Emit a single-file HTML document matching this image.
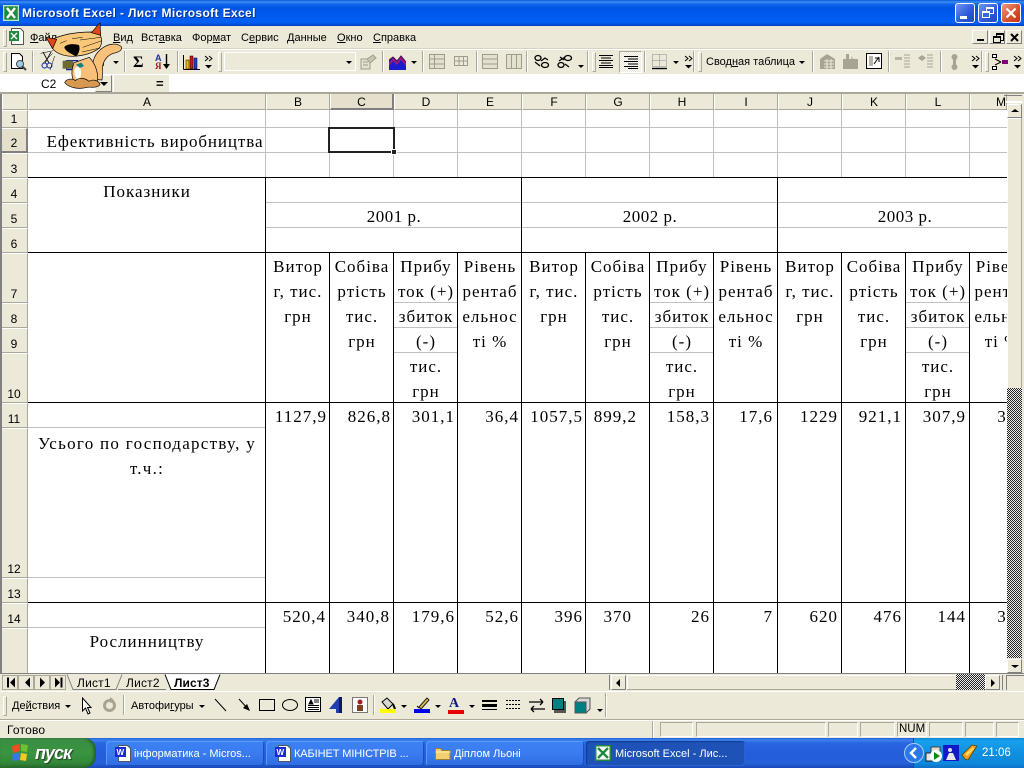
<!DOCTYPE html>
<html><head><meta charset="utf-8"><title>Microsoft Excel</title>
<style>
html,body{margin:0;padding:0;width:1024px;height:768px;overflow:hidden;background:#ece9d8}
div,span,svg{position:absolute}
u{position:static}
.t{white-space:nowrap;font:11px/14px "Liberation Sans",sans-serif;color:#000;letter-spacing:0}
.c,.n{position:absolute;font:17px/25px "Liberation Serif",serif;color:#000;white-space:nowrap;letter-spacing:1px}
.c{width:64px;text-align:center}
.n{text-align:right;margin-right:-1px}
.ch{top:94px;height:16px;font:12px/16px "Liberation Sans",sans-serif;text-align:center;border-right:1px solid #aca899;border-left:1px solid #fff;box-sizing:border-box;border-bottom:1px solid #aca899}
.rh{left:2px;width:26px;font:12px/14px "Liberation Sans",sans-serif;text-align:center;border-bottom:1px solid #aca899;border-top:1px solid #fff;box-sizing:border-box;border-right:1px solid #aca899}
.rh span{position:absolute;left:0;width:24px;bottom:1px}
.sep{width:1px;background:#aca899;border-right:1px solid #fff}
.grip{width:2px;background:#ece9d8;border:1px solid #aca899;border-right-color:#aca899;border-left-color:#fff;border-top-color:#fff}
.dr{width:0;height:0;border-left:3px solid transparent;border-right:3px solid transparent;border-top:3px solid #000}
.dit{background:conic-gradient(#222 25%,#eee 0 50%,#222 0 75%,#eee 0) 0 0/2px 2px}
.btn{background:#ece9d8;border:1px solid;border-color:#fff #808080 #808080 #fff;box-sizing:border-box}
.pn{top:722px;height:15px;border:1px solid;border-color:#aca899 #fff #fff #aca899;box-sizing:border-box}
.task{top:741px;height:25px;background:linear-gradient(#3c81f3,#3a7cf0 50%,#2f6ce0);border-radius:3px;box-shadow:inset 1px 1px 0 #5a9af8,inset -1px -1px 0 #1a4fc0;color:#fff;box-sizing:border-box}
.task span{left:28px;top:6px;color:#fff;font:11px/14px "Liberation Sans",sans-serif;letter-spacing:0;white-space:nowrap}
</style></head>
<body>

<!-- Title bar -->
<div style="left:0;top:0;width:1024px;height:26px;background:linear-gradient(#0a56d8 0,#3f8df6 2px,#1266ec 4px,#0054e3 8px,#0058ee 50%,#0360f4 85%,#0350dc 94%,#0040b8 100%)"></div>
<svg style="left:3px;top:5px" width="16" height="16"><rect width="16" height="16" fill="#fff"/><rect x="1" y="1" width="14" height="14" fill="#1e8a3c"/><path d="M4 3l8 10M12 3l-8 10" stroke="#fff" stroke-width="2.4"/><path d="M1 1h14v14H1z" fill="none" stroke="#7cc48c"/></svg>
<div class="t" style="left:22px;top:6px;font:bold 12px/15px 'Liberation Sans',sans-serif;color:#fff;letter-spacing:.37px;text-shadow:1px 1px 0 #0a2f90">Microsoft Excel - Лист Microsoft Excel</div>
<div style="left:955px;top:3px;width:20px;height:20px;box-sizing:border-box;border:1px solid #fff;border-radius:3px;background:linear-gradient(135deg,#6e97f4,#2a58d8 60%,#2248c0)"><div style="left:4px;top:12px;width:7px;height:3px;background:#fff"></div></div>
<div style="left:978px;top:3px;width:20px;height:20px;box-sizing:border-box;border:1px solid #fff;border-radius:3px;background:linear-gradient(135deg,#6e97f4,#2a58d8 60%,#2248c0)"><div style="left:7px;top:3px;width:8px;height:7px;box-sizing:border-box;border:1px solid #fff;border-top-width:2px"></div><div style="left:3px;top:7px;width:8px;height:7px;box-sizing:border-box;border:1px solid #fff;border-top-width:2px;background:#3a68e0"></div></div>
<div style="left:1001px;top:3px;width:20px;height:20px;box-sizing:border-box;border:1px solid #fff;border-radius:3px;background:linear-gradient(135deg,#eb9a80,#d8502c 60%,#b83414)"><svg style="left:3px;top:3px" width="12" height="12"><path d="M1.500 1.500l9 9M10.500 1.500l-9 9" stroke="#fff" stroke-width="2.200"/></svg></div>

<!-- Menu bar -->
<div class="grip" style="left:3px;top:29px;height:16px"></div>
<svg style="left:8px;top:28px" width="17" height="18"><path d="M3.500.5h9l3 3v13h-12z" fill="#fff" stroke="#555"/><rect x="1" y="3" width="10" height="10" fill="#1e8a3c"/><path d="M3 5l6 6M9 5l-6 6" stroke="#fff" stroke-width="1.400"/></svg>
<div class="t" style="left:30px;top:31px"><u>Ф</u>айл</div>
<div class="t" style="left:113px;top:31px"><u>В</u>ид</div>
<div class="t" style="left:141px;top:31px">Вст<u>а</u>вка</div>
<div class="t" style="left:192px;top:31px">Фор<u>м</u>ат</div>
<div class="t" style="left:241px;top:31px">С<u>е</u>рвис</div>
<div class="t" style="left:287px;top:31px"><u>Д</u>анные</div>
<div class="t" style="left:337px;top:31px"><u>О</u>кно</div>
<div class="t" style="left:373px;top:31px"><u>С</u>правка</div>
<div class="btn" style="left:972px;top:30px;width:16px;height:14px"><div style="left:4px;top:8px;width:7px;height:2px;background:#000"></div></div>
<div class="btn" style="left:989px;top:30px;width:16px;height:14px"><div style="left:6px;top:2px;width:6px;height:5px;border:1px solid #000;border-top-width:2px"></div><div style="left:3px;top:5px;width:6px;height:4px;border:1px solid #000;border-top-width:2px;background:#ece9d8"></div></div>
<div class="btn" style="left:1006px;top:30px;width:16px;height:14px"><svg style="left:3px;top:2px" width="9" height="9"><path d="M1 1l7 7M8 1l-7 7" stroke="#000" stroke-width="2"/></svg></div>
<div style="left:0;top:48px;width:1024px;height:1px;background:#d8d4c4"></div>
<div style="left:0;top:49px;width:1024px;height:1px;background:#fff"></div>

<!-- Standard toolbar -->
<div class="grip" style="left:3px;top:52px;height:18px"></div>
<svg style="left:9px;top:53px" width="18" height="18"><path d="M2.500.5h8l3 3v12h-11z" fill="#fff" stroke="#000"/><circle cx="11" cy="11" r="3.500" fill="#9cd0e8" stroke="#444"/><path d="M13 13l4 4" stroke="#444" stroke-width="2"/></svg>
<div class="sep" style="left:32px;top:51px;height:21px"></div>
<svg style="left:41px;top:52px" width="12" height="17"><path d="M2 0l6 11M10 0L4 11" stroke="#222"/><circle cx="3.500" cy="13.500" r="2.500" fill="none" stroke="#0a2aa0"/><circle cx="8.500" cy="13.500" r="2.500" fill="none" stroke="#0a2aa0"/></svg>
<svg style="left:66px;top:60px" width="14" height="11"><rect x=".5" y=".5" width="11" height="9" fill="#fff" stroke="#0a2aa0" stroke-width="1.500"/><path d="M3 5h6" stroke="#0a2aa0" stroke-width="2"/></svg>
<svg style="left:92px;top:58px" width="14" height="10"><path d="M1 4h4v5H1zM8 1h4v7H8z" fill="#2040c0"/></svg>
<div class="dr" style="left:113px;top:61px"></div>
<div class="sep" style="left:124px;top:51px;height:21px"></div>
<div class="t" style="left:133px;top:54px;font:bold 16px/17px 'Liberation Serif',serif;letter-spacing:0">Σ</div>
<div class="t" style="left:155px;top:54px;font:bold 9px/8px 'Liberation Sans',sans-serif;color:#1830b0;letter-spacing:0">А</div>
<div class="t" style="left:155px;top:62px;font:bold 9px/8px 'Liberation Serif',serif;color:#a01818;letter-spacing:0">Я</div>
<svg style="left:163px;top:54px" width="7" height="16"><path d="M3.500 0v12" stroke="#000" stroke-width="1.400"/><path d="M0 10h7l-3.500 5z"/></svg>
<div class="sep" style="left:177px;top:51px;height:21px"></div>
<svg style="left:183px;top:53px" width="17" height="17"><path d="M.5 16.500V2" stroke="#000"/><path d="M.5 16.500H17" stroke="#000" stroke-width="1"/><rect x="3" y="7" width="3" height="9" fill="#e8c000" stroke="#000" stroke-width=".5"/><rect x="7" y="3" width="3" height="13" fill="#d01818" stroke="#000" stroke-width=".5"/><rect x="11" y="5" width="3" height="11" fill="#2040d0" stroke="#000" stroke-width=".5"/></svg>
<svg style="left:204px;top:55px" width="10" height="14"><path d="M1 1l3 2.500-3 2.500M5 1l3 2.500-3 2.500" fill="none" stroke="#000"/><path d="M1 10h7l-3.500 3.500z"/></svg>
<div class="grip" style="left:218px;top:52px;height:18px"></div>
<div style="left:224px;top:52px;width:132px;height:19px;box-sizing:border-box;border:1px solid #fff"></div>
<div class="dr" style="left:346px;top:61px"></div>
<svg style="left:360px;top:54px" width="17" height="16"><path d="M1 5h9v10H1z" fill="#e4e0d0" stroke="#a09c8c"/><path d="M3 8h5M3 11h5" stroke="#a09c8c"/><path d="M7 5l6-4 3 3-6 5z" fill="#c8c4b4" stroke="#a09c8c"/></svg>
<div class="sep" style="left:382px;top:51px;height:21px"></div>
<svg style="left:389px;top:54px" width="17" height="16"><path d="M0 16V6l4-3 4 4 4-5 5 6v8z" fill="#1a1ad0"/><path d="M0 9l4-5 4 4 4-5 5 6v3l-5-6-4 5-4-4-4 5z" fill="#a01878"/><path d="M0 6l4-3 4 4 4-5 5 6" fill="none" stroke="#500848"/></svg>
<div class="dr" style="left:411px;top:61px"></div>
<div class="sep" style="left:422px;top:51px;height:21px"></div>
<svg style="left:429px;top:54px" width="16" height="15"><path d="M.5.5h15v14H.5zM5.500.5v14M.5 5h15M.5 10h15" fill="#e4e0d0" stroke="#a09c8c"/></svg>
<svg style="left:454px;top:56px" width="14" height="13"><path d="M.5.5h13v9H.5zM5 .5v9M9.500.5v9M.5 5h13" fill="none" stroke="#a09c8c"/></svg>
<div class="sep" style="left:476px;top:51px;height:21px"></div>
<svg style="left:482px;top:54px" width="16" height="15"><path d="M.5.5h15v14H.5zM.5 5h15M.5 10h15" fill="#e4e0d0" stroke="#a09c8c"/></svg>
<svg style="left:506px;top:54px" width="16" height="15"><path d="M.5.5h15v14H.5zM5.500.5v14M10.500.5v14" fill="#e4e0d0" stroke="#a09c8c"/></svg>
<div class="sep" style="left:526px;top:51px;height:21px"></div>
<svg style="left:534px;top:54px" width="16" height="15"><g fill="none" stroke="#000" stroke-width="1.300"><ellipse cx="4" cy="4" rx="3" ry="2.500"/><ellipse cx="11" cy="11" rx="3.500" ry="2.500"/><path d="M1 8l5 4M7 7l4-3 3 2"/></g></svg>
<svg style="left:557px;top:54px" width="16" height="15"><g fill="none" stroke="#000" stroke-width="1.300"><ellipse cx="4" cy="11" rx="3" ry="2.500"/><ellipse cx="11" cy="4" rx="3.500" ry="2.500"/><path d="M3 3l4 3M8 10l4 3M2 7l6-4"/></g></svg>
<div class="dr" style="left:578px;top:65px"></div>
<div class="sep" style="left:587px;top:51px;height:21px"></div>
<div class="grip" style="left:592px;top:52px;height:18px"></div>
<svg style="left:598px;top:55px" width="16" height="13"><path d="M1 .5h14M3 3h10M1 5.500h14M3 8h10M1 10.500h14M1 12.500h14" stroke="#000"/></svg>
<div style="left:619px;top:51px;width:23px;height:22px;box-sizing:border-box;border:1px solid;border-color:#aca899 #fff #fff #aca899;background:repeating-conic-gradient(#fff 0 25%,#e6e3d4 0 50%) 0 0/2px 2px"></div>
<svg style="left:623px;top:56px" width="16" height="13"><path d="M1 .5h14M5 3h10M1 5.500h14M5 8h10M1 10.500h14M5 12.500h10" stroke="#000"/></svg>
<div class="sep" style="left:644px;top:51px;height:21px"></div>
<svg style="left:652px;top:54px" width="16" height="16"><path d="M.5.5h14v12H.5zM7.500.5v12M.5 6.500h14" fill="none" stroke="#888" stroke-dasharray="1 1"/><path d="M0 14.500h15" stroke="#000" stroke-width="1.400"/></svg>
<div class="dr" style="left:673px;top:61px"></div>
<svg style="left:684px;top:55px" width="10" height="14"><path d="M1 1l3 2.500-3 2.500M5 1l3 2.500-3 2.500" fill="none" stroke="#000"/><path d="M1 10h7l-3.500 3.500z"/></svg>
<div class="sep" style="left:693px;top:51px;height:21px"></div>
<div class="grip" style="left:698px;top:52px;height:18px"></div>
<div class="t" style="left:706px;top:55px">Свод<u>н</u>ая таблица</div>
<div class="dr" style="left:799px;top:61px"></div>
<div class="sep" style="left:812px;top:51px;height:21px"></div>
<svg style="left:819px;top:53px" width="17" height="17"><path d="M1 6l7-5 8 5v10H1z" fill="#a8a494"/><path d="M5 8h10M5 11h10M5 14h10M8 6v10M12 6v10" stroke="#ece9d8"/></svg>
<svg style="left:842px;top:53px" width="17" height="17"><path d="M1 16V6h3V1h3v5h9v10z" fill="#a8a494"/><path d="M9 3l3 3h-3z" fill="#c8c4b4"/></svg>
<svg style="left:866px;top:53px" width="16" height="16"><rect x=".5" y=".5" width="15" height="15" fill="#fff" stroke="#000"/><path d="M3 3h4v10H3z" fill="#b8b4a4"/><path d="M8 11l5-7M9 5h4v4" stroke="#000" fill="none"/></svg>
<div class="sep" style="left:888px;top:51px;height:21px"></div>
<svg style="left:894px;top:54px" width="17" height="16"><path d="M1 3h7v3H1z" fill="#b8b4a4"/><path d="M10 1h6M10 4h6M10 7h6M10 10h6M10 13h6" stroke="#a8a494"/></svg>
<svg style="left:917px;top:54px" width="17" height="16"><path d="M1 4l4-3 4 3-4 3z" fill="#a8a494"/><path d="M10 1h6M10 4h6M10 7h6M10 10h6M10 13h6" stroke="#a8a494"/></svg>
<div class="sep" style="left:940px;top:51px;height:21px"></div>
<svg style="left:950px;top:54px" width="9" height="16"><circle cx="4.500" cy="3" r="3" fill="#a8a494"/><circle cx="4.500" cy="13" r="3" fill="#a8a494"/><rect x="3" y="3" width="3" height="10" fill="#a8a494"/></svg>
<svg style="left:971px;top:55px" width="10" height="14"><path d="M1 1l3 2.500-3 2.500M5 1l3 2.500-3 2.500" fill="none" stroke="#000"/><path d="M1 10h7l-3.500 3.500z"/></svg>
<div class="sep" style="left:981px;top:51px;height:21px"></div>
<div class="grip" style="left:985px;top:52px;height:18px"></div>
<svg style="left:992px;top:54px" width="17" height="16"><path d="M.5.5h4v3h-4zM.5 12.500h4v3h-4z" fill="#fff" stroke="#000"/><path d="M3 5l6 3M3 11l6-3" stroke="#000"/><rect x="10" y="6" width="6" height="4" fill="#800080"/></svg>
<svg style="left:1013px;top:55px" width="10" height="14"><path d="M1 1l3 2.500-3 2.500M5 1l3 2.500-3 2.500" fill="none" stroke="#000"/><path d="M1 10h7l-3.500 3.500z"/></svg>

<!-- Formula bar -->
<div style="left:0;top:74px;width:1024px;height:1px;background:#fff"></div>
<div style="left:0;top:75px;width:95px;height:17px;background:#fff"></div>
<div class="t" style="left:41px;top:77px;font-size:12px;letter-spacing:0">C2</div>
<div class="btn" style="left:95px;top:75px;width:17px;height:17px;border-color:#f8f8f0 #808080 #808080 #f8f8f0"><div class="dr" style="left:4px;top:6px;border-left-width:4px;border-right-width:4px;border-top-width:4px"></div></div>
<div style="left:113px;top:75px;width:1px;height:17px;background:#fff"></div>
<div class="t" style="left:156px;top:76px;font:bold 13px/15px 'Liberation Sans',sans-serif;letter-spacing:0">=</div>
<div style="left:169px;top:75px;width:855px;height:17px;background:#fff"></div>
<div style="left:0;top:92px;width:1024px;height:2px;background:#aca899"></div>

<!-- Sheet area -->
<div style="left:0;top:94px;width:2px;height:580px;background:#808080"></div>
<div style="left:28px;top:110px;width:979px;height:564px;background:#fff"></div>

<!-- Header cells -->
<div class="ch" style="left:2px;width:26px">&nbsp;</div>
<div class="ch" style="left:28px;width:238px">A</div>
<div class="ch" style="left:266px;width:64px">B</div>
<div class="ch" style="left:330px;width:64px;border-bottom:2px solid #808080;border-right:2px solid #808080;background:#e4e0cc">C</div>
<div class="ch" style="left:394px;width:64px">D</div>
<div class="ch" style="left:458px;width:64px">E</div>
<div class="ch" style="left:522px;width:64px">F</div>
<div class="ch" style="left:586px;width:64px">G</div>
<div class="ch" style="left:650px;width:64px">H</div>
<div class="ch" style="left:714px;width:64px">I</div>
<div class="ch" style="left:778px;width:64px">J</div>
<div class="ch" style="left:842px;width:64px">K</div>
<div class="ch" style="left:906px;width:64px">L</div>
<div class="ch" style="left:970px;width:37px;overflow:hidden;text-align:left;padding-left:25px">M</div>

<div class="rh" style="top:110px;height:18px"><span>1</span></div>
<div class="rh" style="top:128px;height:25px;border-bottom:2px solid #808080;border-right:2px solid #808080;background:#e4e0cc;font-weight:bold"><span style="font-weight:normal">2</span></div>
<div class="rh" style="top:153px;height:25px"><span>3</span></div>
<div class="rh" style="top:178px;height:25px"><span>4</span></div>
<div class="rh" style="top:203px;height:25px"><span>5</span></div>
<div class="rh" style="top:228px;height:25px"><span>6</span></div>
<div class="rh" style="top:253px;height:50px"><span>7</span></div>
<div class="rh" style="top:303px;height:25px"><span>8</span></div>
<div class="rh" style="top:328px;height:25px"><span>9</span></div>
<div class="rh" style="top:353px;height:50px"><span>10</span></div>
<div class="rh" style="top:403px;height:25px"><span>11</span></div>
<div class="rh" style="top:428px;height:150px"><span>12</span></div>
<div class="rh" style="top:578px;height:25px"><span>13</span></div>
<div class="rh" style="top:603px;height:25px"><span>14</span></div>
<div class="rh" style="top:628px;height:46px;border-bottom:0"></div>

<!-- Grid lines -->
<svg style="left:0;top:0" width="1007" height="674" shape-rendering="crispEdges">
<g stroke="#c0c0c0" fill="none">
<path d="M28 127.500H1007M28 152.500H1007M266 202.500H1007M266 227.500H1007"/>
<path d="M265.500 110V177M329.500 110V177M393.500 110V177M457.500 110V177M521.500 110V177M585.500 110V177M649.500 110V177M713.500 110V177M777.500 110V177M841.500 110V177M905.500 110V177M969.500 110V177"/>
<path d="M394 302.500H457M394 327.500H457M394 352.500H457M650 302.500H713M650 327.500H713M650 352.500H713M906 302.500H969M906 327.500H969M906 352.500H969"/>
<path d="M28 427.500H265M28 577.500H265M28 627.500H265"/>
</g>
<g stroke="#000" fill="none">
<path d="M28 177.500H1007M28 252.500H1007M28 402.500H1007M28 602.500H1007"/>
<path d="M265.500 177V674M521.500 177V674M777.500 177V674"/>
<path d="M329.500 252V674M393.500 252V674M457.500 252V674M585.500 252V674M649.500 252V674M713.500 252V674M841.500 252V674M905.500 252V674M969.500 252V674"/>
</g>
</svg>

<!-- Selected cell -->
<div style="left:328px;top:127px;width:67px;height:26px;box-sizing:border-box;border:2px solid #222"></div>
<div style="left:391px;top:149px;width:4px;height:4px;background:#222;border:1px solid #fff;box-sizing:content-box"></div>

<!-- Cell text -->
<div style="left:28px;top:110px;width:979px;height:564px;overflow:hidden">
<div style="left:-28px;top:-110px;width:1100px;height:800px">
<div class="c" style="left:36px;width:238px;top:129px;letter-spacing:.9px">Ефективність виробництва</div>
<div class="c" style="left:28px;width:238px;top:179px">Показники</div>
<div class="c" style="left:266px;width:256px;top:204px;letter-spacing:.5px">2001 р.</div>
<div class="c" style="left:522px;width:256px;top:204px;letter-spacing:.5px">2002 р.</div>
<div class="c" style="left:777px;width:256px;top:204px;letter-spacing:.5px">2003 р.</div>

<div class="c" style="left:266px;top:254px">Витор<br>г, тис.<br>грн</div>
<div class="c" style="left:330px;top:254px">Собіва<br>ртість<br>тис.<br>грн</div>
<div class="c" style="left:394px;top:254px">Прибу<br>ток (+)<br>збиток<br>(-)<br>тис.<br>грн</div>
<div class="c" style="left:458px;top:254px">Рівень<br>рентаб<br>ельнос<br>ті %</div>
<div class="c" style="left:522px;top:254px">Витор<br>г, тис.<br>грн</div>
<div class="c" style="left:586px;top:254px">Собіва<br>ртість<br>тис.<br>грн</div>
<div class="c" style="left:650px;top:254px">Прибу<br>ток (+)<br>збиток<br>(-)<br>тис.<br>грн</div>
<div class="c" style="left:714px;top:254px">Рівень<br>рентаб<br>ельнос<br>ті %</div>
<div class="c" style="left:778px;top:254px">Витор<br>г, тис.<br>грн</div>
<div class="c" style="left:842px;top:254px">Собіва<br>ртість<br>тис.<br>грн</div>
<div class="c" style="left:906px;top:254px">Прибу<br>ток (+)<br>збиток<br>(-)<br>тис.<br>грн</div>
<div class="c" style="left:970px;top:254px">Рівень<br>рентаб<br>ельнос<br>ті %</div>

<div class="n" style="right:774px;top:404px">1127,9</div>
<div class="n" style="right:710px;top:404px">826,8</div>
<div class="n" style="right:646px;top:404px">301,1</div>
<div class="n" style="right:582px;top:404px">36,4</div>
<div class="n" style="right:518px;top:404px">1057,5</div>
<div class="n" style="right:464px;top:404px">899,2</div>
<div class="n" style="right:391px;top:404px">158,3</div>
<div class="n" style="right:328px;top:404px">17,6</div>
<div class="n" style="right:263px;top:404px">1229</div>
<div class="n" style="right:199px;top:404px">921,1</div>
<div class="n" style="right:135px;top:404px">307,9</div>
<div class="n" style="right:70px;top:404px">33,4</div>

<div class="c" style="left:28px;width:238px;top:431px;letter-spacing:1.280px">Усього по господарству, у<br>т.ч.:</div>

<div class="n" style="right:775px;top:604px">520,4</div>
<div class="n" style="right:711px;top:604px">340,8</div>
<div class="n" style="right:646px;top:604px">179,6</div>
<div class="n" style="right:582px;top:604px">52,6</div>
<div class="n" style="right:518px;top:604px">396</div>
<div class="n" style="right:469px;top:604px">370</div>
<div class="n" style="right:391px;top:604px">26</div>
<div class="n" style="right:328px;top:604px">7</div>
<div class="n" style="right:263px;top:604px">620</div>
<div class="n" style="right:199px;top:604px">476</div>
<div class="n" style="right:135px;top:604px">144</div>
<div class="n" style="right:70px;top:604px">30,3</div>

<div class="c" style="left:28px;width:238px;top:629px">Рослинництву</div>
</div></div>

<!-- Vertical scrollbar -->
<div style="left:1007px;top:94px;width:17px;height:580px;background:#ece9d8"></div>
<div style="left:1004px;top:95px;width:18px;height:1px;background:#808080"></div>
<div style="left:1006px;top:101px;width:16px;height:2px;background:#fff"></div>
<div class="btn" style="left:1007px;top:104px;width:15px;height:14px"><div class="dr" style="left:3px;top:4px;border-top:0;border-bottom:3px solid #000;border-left-width:4px;border-right-width:4px"></div></div>
<div style="left:1007px;top:118px;width:15px;height:270px;background:#ece9d8;border-right:1px solid #aca899;box-sizing:border-box;box-shadow:inset 1px 1px 0 #fff"></div>
<div class="dit" style="left:1007px;top:388px;width:15px;height:270px"></div>
<div class="btn" style="left:1007px;top:659px;width:15px;height:14px"><div class="dr" style="left:3px;top:5px;border-left-width:4px;border-right-width:4px"></div></div>

<!-- Tabs row -->
<div style="left:0;top:673px;width:1024px;height:1px;background:#808080"></div>
<div style="left:0;top:674px;width:1024px;height:18px;background:#ece9d8"></div>
<svg style="left:2px;top:675px" width="66" height="15"><g fill="none" stroke="#aca899"><path d="M.5.5h15v14H.5zM16.500.5h15v14h-15zM32.500.5h15v14h-15zM48.500.5h15v14h-15z"/></g><path d="M5 2.500h2v10H5zM13 2.500v10L8 7.500zM28 2.500v10l-5-5zM38 2.500v10l5-5zM53 2.500v10l5-5zM58.500 2.500h2v10h-2z"/></svg>
<svg style="left:0;top:674px" width="230" height="17"><path d="M165 .5l6 15h43l6-15z" fill="#fff"/><g fill="none" stroke="#808080"><path d="M67 .5L73 15.500H116L122 .5"/><path d="M118 15.500H166"/></g><g fill="none" stroke="#000"><path d="M165 .5L171 15.500H214L220 .5"/></g></svg>
<div class="t" style="left:77px;top:676px;font-size:12px;letter-spacing:.2px">Лист1</div>
<div class="t" style="left:126px;top:676px;font-size:12px;letter-spacing:.2px">Лист2</div>
<div class="t" style="left:174px;top:676px;font:bold 12px/14px 'Liberation Sans',sans-serif;letter-spacing:.1px">Лист3</div>

<!-- Horizontal scrollbar -->
<div style="left:609px;top:675px;width:1px;height:15px;background:#808080"></div>
<div class="btn" style="left:611px;top:675px;width:15px;height:15px"><div class="dr" style="left:4px;top:3px;border-top:4px solid transparent;border-bottom:4px solid transparent;border-right:4px solid #000;border-left:0"></div></div>
<div style="left:627px;top:675px;width:329px;height:15px;box-sizing:border-box;border-bottom:1px solid #aca899;box-shadow:inset 1px 1px 0 #fff"></div>
<div class="dit" style="left:956px;top:674px;width:29px;height:16px"></div>
<div class="btn" style="left:985px;top:675px;width:15px;height:15px"><div class="dr" style="left:5px;top:3px;border-top:4px solid transparent;border-bottom:4px solid transparent;border-left:4px solid #000;border-right:0"></div></div>
<div style="left:1002px;top:675px;width:1px;height:15px;background:#808080"></div>
<div style="left:1006px;top:675px;width:1px;height:15px;background:#808080"></div>
<div style="left:1006px;top:675px;width:18px;height:1px;background:#808080"></div>

<!-- Drawing toolbar -->
<div style="left:0;top:691px;width:1024px;height:1px;background:#fff"></div>
<div class="grip" style="left:3px;top:696px;height:18px"></div>
<div class="t" style="left:12px;top:699px">Де<u>й</u>ствия</div>
<div class="dr" style="left:65px;top:705px"></div>
<svg style="left:81px;top:697px" width="12" height="18"><path d="M1.500 1v13l3-3 2.500 6 2-1-2.500-5.500H10z" fill="#fff" stroke="#000"/></svg>
<svg style="left:102px;top:697px" width="15" height="16"><circle cx="7.500" cy="8.500" r="5" fill="none" stroke="#a8a494" stroke-width="3"/><path d="M8 0v6l4-3z" fill="#a8a494"/></svg>
<div class="sep" style="left:123px;top:695px;height:20px"></div>
<div class="t" style="left:131px;top:699px">Автофи<u>г</u>уры</div>
<div class="dr" style="left:199px;top:705px"></div>
<svg style="left:214px;top:698px" width="13" height="14"><path d="M1 1l11 12" stroke="#000"/></svg>
<svg style="left:238px;top:698px" width="13" height="14"><path d="M1 1l9 10" stroke="#000"/><path d="M12 13L5 10l4-4z"/></svg>
<div style="left:259px;top:699px;width:16px;height:12px;box-sizing:border-box;border:1px solid #000"></div>
<div style="left:282px;top:699px;width:16px;height:12px;box-sizing:border-box;border:1px solid #000;border-radius:50%"></div>
<svg style="left:305px;top:697px" width="17" height="16"><rect x=".5" y=".5" width="15" height="14" fill="#fff" stroke="#000"/><path d="M6 3l-2 4h4zM9 3h5M9 5h5M3 8.500h11M3 10.500h11M3 12.500h11" stroke="#000" fill="#000"/></svg>
<svg style="left:328px;top:696px" width="17" height="18"><path d="M1 13L11 1v16H8v-4z" fill="#2040b0"/><path d="M11 1h3v16h-3z" fill="#101860"/></svg>
<svg style="left:352px;top:697px" width="16" height="16"><rect x=".5" y=".5" width="15" height="15" fill="#fff" stroke="#000" stroke-dasharray="1 1"/><circle cx="8" cy="5" r="2.500" fill="#a02020"/><path d="M5 8h6v6H5z" fill="#804020"/></svg>
<div class="sep" style="left:373px;top:695px;height:20px"></div>
<svg style="left:380px;top:697px" width="16" height="17"><path d="M2 5l5-4 6 6-5 5z" fill="#d8d8d0" stroke="#000"/><path d="M13 7l2 5" stroke="#000" stroke-width="2"/><rect y="12" width="16" height="4" fill="#ffff00"/></svg>
<div class="dr" style="left:401px;top:705px"></div>
<svg style="left:414px;top:697px" width="16" height="17"><path d="M5 10l8-9 2 2-8 9z" fill="#e0c040" stroke="#202020"/><path d="M3 9l2 2" stroke="#000"/><rect y="12" width="16" height="4" fill="#0000f0"/></svg>
<div class="dr" style="left:435px;top:705px"></div>
<div class="t" style="left:449px;top:696px;font:bold 14px/15px 'Liberation Serif',serif;color:#101880;letter-spacing:0">A</div>
<div style="left:448px;top:710px;width:16px;height:4px;background:#e80000"></div>
<div class="dr" style="left:469px;top:705px"></div>
<div style="left:482px;top:700px;width:15px;height:2px;background:#000"></div><div style="left:482px;top:704px;width:15px;height:3px;background:#000"></div><div style="left:482px;top:709px;width:15px;height:1px;background:#000"></div>
<svg style="left:506px;top:699px" width="15" height="12"><path d="M0 1.500h15M0 5.500h15M0 9.500h15" stroke="#000" stroke-dasharray="2 1"/></svg>
<svg style="left:529px;top:698px" width="16" height="15"><path d="M0 4h14M14 4l-3-3M14 4l-3 3M16 11H2M2 11l3-3M2 11l3 3" stroke="#000" stroke-width="1.300" fill="none"/></svg>
<svg style="left:552px;top:698px" width="14" height="15"><rect x="2" y="3" width="12" height="12" fill="#555"/><rect x=".5" y=".5" width="11" height="11" fill="#008080" stroke="#000"/></svg>
<svg style="left:574px;top:697px" width="17" height="17"><path d="M1 5l4-4h11v11l-4 4z" fill="#d8d8d8" stroke="#555"/><rect x="1" y="5" width="11" height="11" fill="#008080" stroke="#555"/></svg>
<div class="dr" style="left:597px;top:709px"></div>
<div class="sep" style="left:605px;top:693px;height:24px"></div>

<!-- Status bar -->
<div style="left:0;top:719px;width:1024px;height:1px;background:#aca899"></div>
<div style="left:0;top:720px;width:1024px;height:1px;background:#fff"></div>
<div class="t" style="left:7px;top:723px;font-size:12px;letter-spacing:.2px">Готово</div>
<div style="left:652px;top:721px;width:1px;height:17px;background:#aca899"></div>
<div style="left:653px;top:721px;width:1px;height:17px;background:#fff"></div>
<div class="pn" style="left:660px;width:33px"></div>
<div class="pn" style="left:696px;width:130px"></div>
<div class="pn" style="left:828px;width:30px"></div>
<div class="pn" style="left:860px;width:35px"></div>
<div class="pn" style="left:897px;width:30px"><div class="t" style="left:1px;top:0;font-size:11.500px;line-height:13px;letter-spacing:0">NUM</div></div>
<div class="pn" style="left:929px;width:34px"></div>
<div class="pn" style="left:965px;width:29px"></div>
<div class="pn" style="left:996px;width:23px"></div>

<!-- Taskbar -->
<div style="left:0;top:738px;width:1024px;height:30px;background:linear-gradient(#1f5fd8 0,#3c82ee 2px,#2a66e0 5px,#245edb 50%,#2460d8 85%,#1a48b8 100%)"></div>
<div style="left:0;top:738px;width:96px;height:30px;border-radius:0 12px 12px 0;background:linear-gradient(#4a9a52 0,#3a8f42 12%,#3a9440 50%,#338a3a 80%,#2a7030 100%);box-shadow:inset -2px 0 3px #1f5c24"></div>
<svg style="left:10px;top:743px" width="20" height="20"><path d="M2 3l7-2 1 7-7 2z" fill="#e85020"/><path d="M11 1l7 1-1 7-6-1z" fill="#70c030"/><path d="M2 11l7-1 1 7-7 1z" fill="#3878e0"/><path d="M11 10l6 1-1 7-6-1z" fill="#f8c820"/></svg>
<div class="t" style="left:35px;top:743px;font:italic bold 18px/20px 'Liberation Sans',sans-serif;color:#fff;letter-spacing:-1px;text-shadow:1px 1px 1px #204020">пуск</div>

<div class="task" style="left:106px;width:158px"><svg style="left:9px;top:4px" width="16" height="17"><path d="M3.500.5h9l3 3v13h-12z" fill="#fff" stroke="#555"/><rect y="2" width="11" height="10" fill="#1a2ad0"/><text x="1.500" y="10" font-size="8" font-weight="bold" fill="#fff" font-family="Liberation Sans">W</text></svg><span>інформатика - Micros...</span></div>
<div class="task" style="left:266px;width:158px"><svg style="left:9px;top:4px" width="16" height="17"><path d="M3.500.5h9l3 3v13h-12z" fill="#fff" stroke="#555"/><rect y="2" width="11" height="10" fill="#1a2ad0"/><text x="1.500" y="10" font-size="8" font-weight="bold" fill="#fff" font-family="Liberation Sans">W</text></svg><span style="letter-spacing:-.1px">КАБІНЕТ МІНІСТРІВ ...</span></div>
<div class="task" style="left:426px;width:158px"><svg style="left:9px;top:5px" width="16" height="14"><path d="M.5 2.500h5l1.500 2h8v9H.5z" fill="#f0d070" stroke="#a08030"/><path d="M.5 6h15" stroke="#fff0b0"/></svg><span>Діплом Льоні</span></div>
<div class="task" style="left:586px;width:159px;background:#1e52b7;box-shadow:inset 1px 1px 1px #143c90,inset -1px -1px 0 #2a62d0"><svg style="left:9px;top:4px" width="16" height="16"><rect width="16" height="16" fill="#1e8a3c"/><rect x="1.500" y="1.500" width="13" height="13" fill="#fff"/><path d="M3 3l10 10M13 3L3 13" stroke="#1e8a3c" stroke-width="2.400"/></svg><span style="left:29px">Microsoft Excel - Лис...</span></div>

<div style="left:913px;top:738px;width:111px;height:30px;background:linear-gradient(#0c8ad8 0,#18a0ec 3px,#0f8fe0 50%,#0e88dc 85%,#0c70c8 100%);border-left:1px solid #0a4fa8;box-sizing:border-box"></div>
<svg style="left:904px;top:743px" width="20" height="20"><circle cx="10" cy="10" r="9.500" fill="#2a78e8" stroke="#a8d0f8"/><path d="M12 5l-5 5 5 5" fill="none" stroke="#fff" stroke-width="2.400"/></svg>
<svg style="left:925px;top:746px" width="17" height="17"><rect x="6" y="1" width="9" height="8" fill="#ddd" stroke="#444"/><rect x="1" y="7" width="9" height="8" fill="#e8e8e0" stroke="#222"/><circle cx="11" cy="10" r="6" fill="#fff"/><path d="M9 6l6 4-6 4z" fill="#0a8a20"/></svg>
<svg style="left:943px;top:745px" width="16" height="16"><rect width="16" height="16" fill="#1418c8"/><path d="M3 15l3-7h4l3 7z" fill="#e8e8e8"/><circle cx="7" cy="5" r="2" fill="#ddd"/></svg>
<svg style="left:961px;top:744px" width="17" height="18"><path d="M1 11L11 1l5 1-9 14-3-1z" fill="#f0a020" stroke="#604000" stroke-width=".8"/><path d="M4 10l8-7 1 2-7 7z" fill="#ffd860"/></svg>
<div class="t" style="left:982px;top:746px;color:#fff;font-size:11.500px;letter-spacing:0">21:06</div>

<!-- Cat overlay -->
<svg style="left:0;top:20px" width="130" height="80" viewBox="0 0 390 240">
<g stroke="#000" stroke-width="2" stroke-linejoin="round">
<path d="M188 122h32v24h-32z" fill="#6e6a30" stroke="none"/>
<path d="M282 178C272 140 278 108 302 88 322 72 348 66 364 80 368 90 358 96 340 100 322 106 310 122 308 140 306 156 308 168 306 180z" fill="#f8c078"/>
<path d="M222 128C214 150 214 170 222 184L292 184C296 160 286 130 268 112z" fill="#f8c078"/>
<path d="M226 142C220 156 224 174 236 182 244 172 246 154 238 138z" fill="#fff" stroke="none"/>
<path d="M228 134l16 -6 8 10-12 6z" fill="#108080" stroke="none"/>
<path d="M194 188C198 176 218 174 226 182 236 172 258 174 266 184 280 176 298 182 300 194 290 206 270 200 262 202 240 208 210 206 194 188z" fill="#d89850"/>
<path d="M148 62C190 40 240 36 276 36L300 44C308 58 306 76 296 86 270 104 226 114 192 106 170 100 154 90 148 62z" fill="#f8c878"/>
<path d="M138 52L170 58 158 86z" fill="#e04818"/>
<path d="M274 38L300 8 302 46z" fill="#e04818"/>
<path d="M194 82C200 72 222 72 236 76 240 86 236 100 228 108 214 100 198 94 194 82z" fill="#000"/>
<g fill="none" stroke-width="1.500">
<path d="M160 92L122 100M158 100L130 128M164 108L150 150M240 60L302 52M248 82L306 62M246 96L300 84"/>
<path d="M180 70L200 62M216 56L248 52"/>
</g>
</g>
</svg>

</body></html>
